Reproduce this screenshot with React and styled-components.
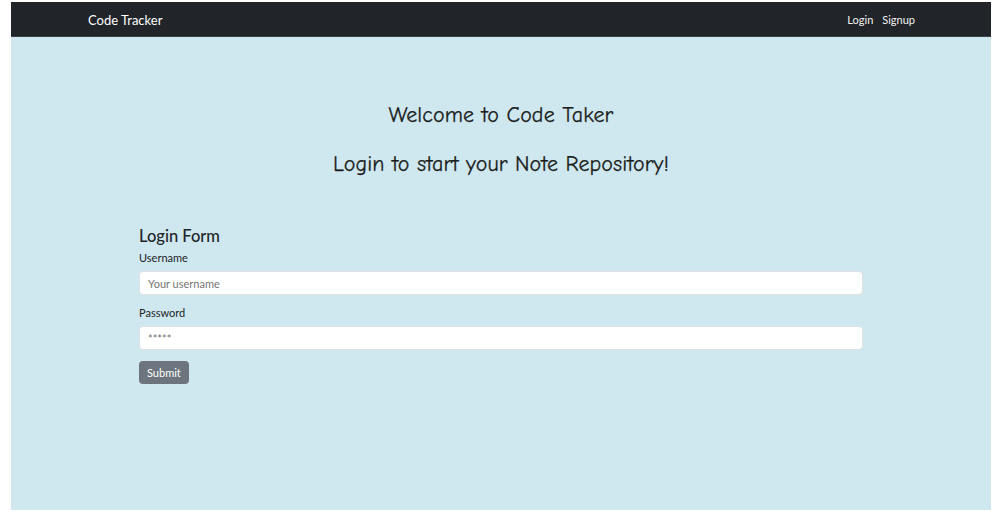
import React from 'react'
import styled, { createGlobalStyle } from 'styled-components'

const GlobalStyle = createGlobalStyle`
  html, body {
    margin: 0;
    padding: 0;
    background: #ffffff;
  }
  * {
    box-sizing: border-box;
  }
`

function App() {
  return (
    <StFrame>
      <GlobalStyle />
      <StPage>
        <StNavbar>
          <StBrand href="#">Code Tracker</StBrand>
          <StNavLinks>
            <StNavLink href="#">Login</StNavLink>
            <StNavLink href="#">Signup</StNavLink>
          </StNavLinks>
        </StNavbar>
        <StMain>
          <StHero>
            <StHeroTitle>Welcome to Code Taker</StHeroTitle>
            <StHeroTitle>Login to start your Note Repository!</StHeroTitle>
          </StHero>
          <StForm onSubmit={(e) => e.preventDefault()}>
            <StFormTitle>Login Form</StFormTitle>
            <StField>
              <StLabel htmlFor="username">Username</StLabel>
              <StInput id="username" type="text" placeholder="Your username" />
            </StField>
            <StField>
              <StLabel htmlFor="password">Password</StLabel>
              <StInput id="password" type="password" placeholder="*****" />
            </StField>
            <StButton type="submit">Submit</StButton>
          </StForm>
        </StMain>
      </StPage>
    </StFrame>
  )
}

const StFrame = styled.div`
  height: 100vh;
  padding: 2px 5px 11px 11px;
  font-family: "Lato", "Noto Sans", sans-serif;
  color: #212529;
`
const StPage = styled.div`
  height: 100%;
  display: flex;
  flex-direction: column;
  background: #cfe7ee;
`
const StNavbar = styled.nav`
  height: 35px;
  flex-shrink: 0;
  background: #212529;
  border-bottom: 1px solid #3a3f44;
  display: flex;
  align-items: center;
  justify-content: space-between;
  padding: 1px 76px 0 77px;
`
const StBrand = styled.a`
  color: #ffffff;
  font-size: 13px;
  text-decoration: none;
`
const StNavLinks = styled.div`
  display: flex;
  gap: 9px;
`
const StNavLink = styled.a`
  color: #f2f2f2;
  font-size: 11px;
  text-decoration: none;
`
const StMain = styled.main`
  flex: 1;
  padding: 65px 128px 0;
`
const StHero = styled.div`
  display: flex;
  flex-direction: column;
  align-items: center;
  gap: 22px;
`
const StHeroTitle = styled.h2`
  margin: 0;
  font-family: "Comic Sans MS", "Comic Neue", "Noto Sans", sans-serif;
  font-weight: 400;
  font-size: 22px;
  line-height: 27px;
  letter-spacing: 0.1px;
  color: #1a1d20;
  -webkit-text-stroke: 0.25px #1a1d20;
`
const StForm = styled.form`
  margin-top: 49px;
  display: flex;
  flex-direction: column;
  align-items: flex-start;
`
const StFormTitle = styled.h4`
  margin: 0 0 4px;
  font-size: 16.5px;
  line-height: 19px;
  font-weight: 500;
`
const StField = styled.div`
  width: 100%;
  display: flex;
  flex-direction: column;
  margin-bottom: 10px;
`
const StLabel = styled.label`
  font-size: 11px;
  line-height: 16px;
  margin-bottom: 5px;
`
const StInput = styled.input`
  width: 100%;
  height: 24px;
  padding: 0 8px;
  border: 1px solid #dee2e6;
  border-radius: 4px;
  background: #ffffff;
  font-family: inherit;
  font-size: 11px;
  color: #212529;
  outline: none;
  ::placeholder {
    color: #6c757d;
  }
`
const StButton = styled.button`
  margin-top: 1px;
  height: 23px;
  padding: 0 8px;
  border: none;
  border-radius: 4px;
  background: #6c757d;
  color: #ffffff;
  font-family: inherit;
  font-size: 11px;
  cursor: pointer;
`

export default App
